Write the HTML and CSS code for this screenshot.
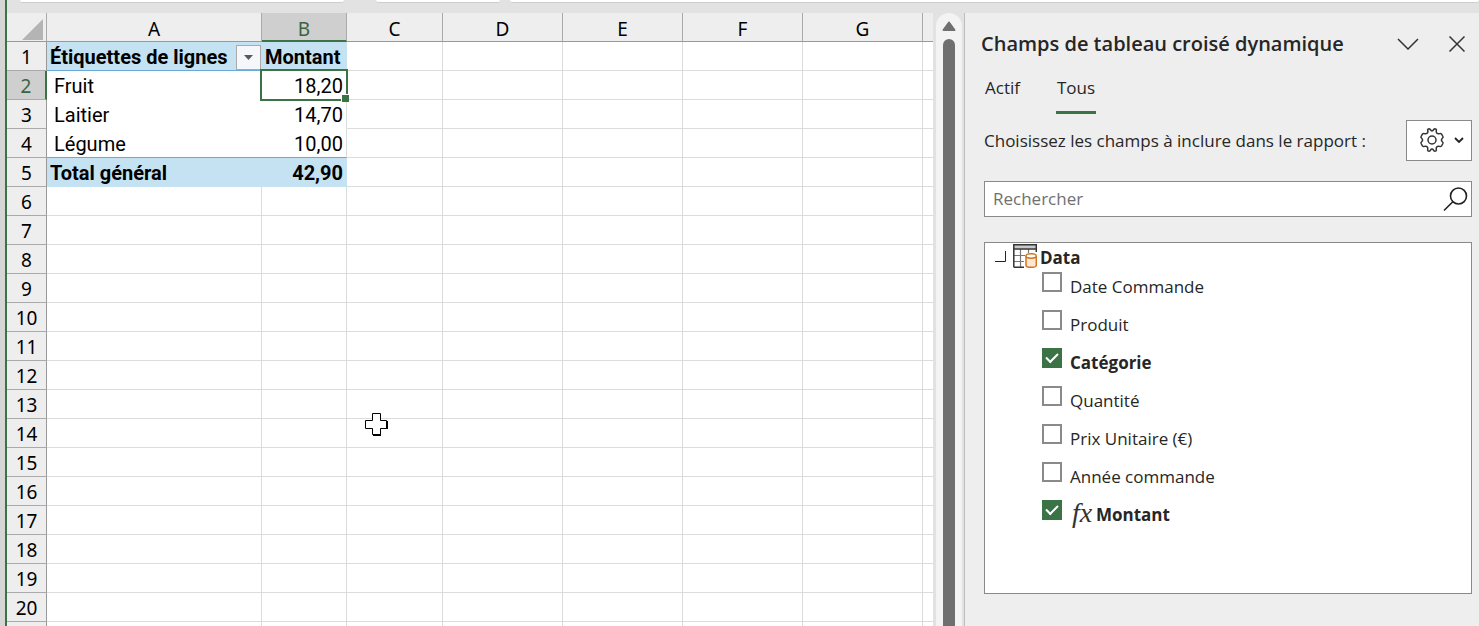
FILE: index.html
```
<!DOCTYPE html>
<html lang="fr">
<head>
  <meta charset="UTF-8">
  <meta name="viewport" content="width=device-width, initial-scale=1.0">
  <title>Tableau croisé dynamique</title>
  <link rel="stylesheet" href="styles.css">
</head>
<body>
  <div class="window">
    <div class="formula-bar">
      <div class="name-box"></div>
      <div class="formula-tools"></div>
      <div class="formula-input"></div>
    </div>

    <div class="workspace">
      <div class="sheet">
        <table class="grid">
          <colgroup>
            <col class="col-num">
            <col class="col-a">
            <col class="col-b">
            <col class="col-c">
            <col class="col-std">
            <col class="col-std">
            <col class="col-std">
            <col class="col-std">
            <col>
          </colgroup>
          <thead>
            <tr>
              <th class="corner"><svg width="21" height="21" viewBox="0 0 21 21"><path d="M21 0V21H0Z" fill="#b4b4b4"/></svg></th>
              <th>A</th>
              <th class="active">B</th>
              <th>C</th>
              <th>D</th>
              <th>E</th>
              <th>F</th>
              <th>G</th>
              <th></th>
            </tr>
          </thead>
          <tbody>
            <tr class="pivot-head">
              <th>1</th>
              <td>
                <div class="filter-cell">
                  <span>Étiquettes de lignes</span>
                  <button class="filter" aria-label="Filtrer"><svg width="9" height="5" viewBox="0 0 9 5"><path d="M0 0H9L4.5 5Z" fill="#595959"/></svg></button>
                </div>
              </td>
              <td>Montant</td>
              <td></td><td></td><td></td><td></td><td></td><td></td>
            </tr>
            <tr class="pivot-row">
              <th class="active">2</th>
              <td>Fruit</td>
              <td class="selected">18,20</td>
              <td></td><td></td><td></td><td></td><td></td><td></td>
            </tr>
            <tr class="pivot-row">
              <th>3</th>
              <td>Laitier</td>
              <td>14,70</td>
              <td></td><td></td><td></td><td></td><td></td><td></td>
            </tr>
            <tr class="pivot-row pivot-last">
              <th>4</th>
              <td>Légume</td>
              <td>10,00</td>
              <td></td><td></td><td></td><td></td><td></td><td></td>
            </tr>
            <tr class="pivot-total">
              <th>5</th>
              <td>Total général</td>
              <td>42,90</td>
              <td></td><td></td><td></td><td></td><td></td><td></td>
            </tr>
            <tr><th>6</th><td></td><td></td><td></td><td></td><td></td><td></td><td></td><td></td></tr>
            <tr><th>7</th><td></td><td></td><td></td><td></td><td></td><td></td><td></td><td></td></tr>
            <tr><th>8</th><td></td><td></td><td></td><td></td><td></td><td></td><td></td><td></td></tr>
            <tr><th>9</th><td></td><td></td><td></td><td></td><td></td><td></td><td></td><td></td></tr>
            <tr><th>10</th><td></td><td></td><td></td><td></td><td></td><td></td><td></td><td></td></tr>
            <tr><th>11</th><td></td><td></td><td></td><td></td><td></td><td></td><td></td><td></td></tr>
            <tr><th>12</th><td></td><td></td><td></td><td></td><td></td><td></td><td></td><td></td></tr>
            <tr><th>13</th><td></td><td></td><td></td><td></td><td></td><td></td><td></td><td></td></tr>
            <tr><th>14</th><td></td><td></td><td></td><td></td><td></td><td></td><td></td><td></td></tr>
            <tr><th>15</th><td></td><td></td><td></td><td></td><td></td><td></td><td></td><td></td></tr>
            <tr><th>16</th><td></td><td></td><td></td><td></td><td></td><td></td><td></td><td></td></tr>
            <tr><th>17</th><td></td><td></td><td></td><td></td><td></td><td></td><td></td><td></td></tr>
            <tr><th>18</th><td></td><td></td><td></td><td></td><td></td><td></td><td></td><td></td></tr>
            <tr><th>19</th><td></td><td></td><td></td><td></td><td></td><td></td><td></td><td></td></tr>
            <tr><th>20</th><td></td><td></td><td></td><td></td><td></td><td></td><td></td><td></td></tr>
            <tr><th></th><td></td><td></td><td></td><td></td><td></td><td></td><td></td><td></td></tr>
          </tbody>
        </table>
        <svg class="cursor" width="23" height="23" viewBox="0 0 23 23">
          <path d="M8 1H16V8H23V16H16V23H8V16H1V8H8Z" fill="#000"/>
          <path d="M7.5 .5H15.5V7.5H21.5V15.5H15.5V21.5H7.5V15.5H.5V7.5H7.5Z" fill="#fff" stroke="#000"/>
        </svg>
      </div>

      <div class="scrollbar">
        <svg width="14" height="10" viewBox="0 0 14 10"><path d="M7 1.5L12.5 9H1.5Z" fill="#6f6f6f" stroke="#6f6f6f" stroke-width="2" stroke-linejoin="round"/></svg>
        <div class="thumb"></div>
      </div>

      <aside class="pane">
        <header class="pane-header">
          <h1>Champs de tableau croisé dynamique</h1>
          <button class="icon-button" aria-label="Options du volet"><svg width="22" height="12" viewBox="0 0 22 12"><path d="M1 1L11 11L21 1" fill="none" stroke="#333" stroke-width="1.5"/></svg></button>
          <button class="icon-button" aria-label="Fermer"><svg width="16" height="16" viewBox="0 0 16 16"><path d="M.5 .5L15.5 15.5M15.5 .5L.5 15.5" stroke="#333" stroke-width="1.5"/></svg></button>
        </header>

        <nav class="tabs">
          <button class="tab">Actif</button>
          <button class="tab current">Tous</button>
        </nav>

        <div class="choose">
          <p>Choisissez les champs à inclure dans le rapport :</p>
          <button class="tools" aria-label="Outils">
            <svg width="26" height="26" viewBox="0 0 26 26" fill="none" stroke="#333" stroke-width="1.5" stroke-linejoin="round">
              <path d="M9 5L8.600 2.800Q8.700 1.800 10.200 1.700Q11.200 1.700 11.400 2.800Q13 5 14.600 2.800Q14.800 1.700 15.800 1.700Q17.300 1.800 17.400 2.800L17.200 5Q18 7.400 20.600 6.600Q21.800 6 22.600 7.200L23.900 9.500Q24.400 10.600 23.400 11.200Q21.400 13 23.400 14.800Q24.400 15.400 23.900 16.500L22.600 18.800Q21.800 20 20.600 19.400Q18 18.600 17.200 21L17.400 23.200Q17.300 24.200 15.800 24.300Q14.800 24.300 14.600 23.200Q13 21 11.400 23.200Q11.200 24.300 10.200 24.300Q8.700 24.200 8.600 23.200L8.800 21Q8 18.600 5.400 19.400Q4.200 20 3.400 18.800L2.100 16.500Q1.600 15.400 2.600 14.800Q4.600 13 2.600 11.200Q1.600 10.600 2.100 9.500L3.400 7.200Q4.200 6 5.400 6.600Q8 7.400 9 5Z"/>
              <circle cx="13" cy="13" r="4"/>
            </svg>
            <svg width="10" height="6" viewBox="0 0 10 6"><path d="M1 1L5 5L9 1" fill="none" stroke="#222" stroke-width="1.8"/></svg>
          </button>
        </div>

        <div class="search">
          <input type="text" placeholder="Rechercher" aria-label="Rechercher">
          <svg width="25" height="25" viewBox="0 0 25 25" fill="none" stroke="#222" stroke-width="1.6"><circle cx="15.500" cy="9" r="8"/><path d="M9.800 14.700L1 23.500"/></svg>
        </div>

        <div class="fields">
          <div class="source">
            <svg width="11" height="11" viewBox="0 0 11 11"><path d="M10.5 0V10.5H0" fill="none" stroke="#222"/></svg>
            <svg width="24" height="24" viewBox="0 0 24 24" fill="none">
              <rect x=".5" y=".5" width="23" height="4" fill="#c8c8c8"/>
              <path d="M1 11.500H12M1 17.500H11M7.500 5V23M15.500 5V9" stroke="#777" stroke-width="1.2"/>
              <path d="M.8 23.300V.8H23.300V8M.8 5H23.300M.8 23.300H11" stroke="#333" stroke-width="1.5"/>
              <path d="M13 12V21.500Q13 23.300 18 23.300T23.300 21.500V12" fill="#fce8d4" stroke="#d4731c" stroke-width="1.5"/>
              <ellipse cx="18.100" cy="12" rx="5.100" ry="2.200" fill="#fff" stroke="#d4731c" stroke-width="1.5"/>
            </svg>
            <span>Data</span>
          </div>
          <ul>
            <li><label><input type="checkbox"><span>Date Commande</span></label></li>
            <li><label><input type="checkbox"><span>Produit</span></label></li>
            <li><label><input type="checkbox" checked><span>Catégorie</span></label></li>
            <li><label><input type="checkbox"><span>Quantité</span></label></li>
            <li><label><input type="checkbox"><span>Prix Unitaire (€)</span></label></li>
            <li><label><input type="checkbox"><span>Année commande</span></label></li>
            <li><label><input type="checkbox" checked><i class="fx">fx</i><span>Montant</span></label></li>
          </ul>
        </div>
      </aside>
    </div>
  </div>
</body>
</html>
```

FILE: styles.css
```
* {
  box-sizing: border-box;
}

body {
  margin: 0;
  font-family: "Open Sans", "Noto Sans", sans-serif;
  color: #262626;
  background-color: #d6d6d6;
}

button {
  font: inherit;
  color: inherit;
  padding: 0;
  cursor: pointer;
}

svg {
  display: block;
  flex-shrink: 0;
}

.window {
  display: flex;
  flex-direction: column;
  height: 100vh;
  margin-left: 5px;
  border-left: 2px solid #3b7347;
  background-color: #e2e2e2;
  overflow: hidden;
}

/* Bottom edge of the formula bar */
.formula-bar {
  display: flex;
  align-items: flex-start;
  height: 13px;
  padding-left: 13px;
  flex-shrink: 0;
}

.formula-bar div {
  height: 3px;
  background-color: #fff;
  border-bottom: 1px solid #cdcdcd;
  border-radius: 0 0 4px 4px;
}

.formula-bar .name-box {
  width: 324px;
}

.formula-bar .formula-tools {
  width: 124px;
  margin: 0 10px 0 32px;
}

.formula-bar .formula-input {
  flex: 1;
}

.workspace {
  display: flex;
  flex: 1;
  min-height: 0;
}

/* Spreadsheet */
.sheet {
  position: relative;
  flex: 1;
  min-width: 0;
  background-color: #fff;
  overflow: hidden;
}

.grid {
  width: 100%;
  table-layout: fixed;
  border-collapse: separate;
  border-spacing: 0;
  font-family: Roboto, sans-serif;
  font-size: 20px;
  line-height: 26px;
  color: #000;
}

.col-num {
  width: 40px;
}

.col-a {
  width: 215px;
}

.col-b {
  width: 85px;
}

.col-c {
  width: 96px;
}

.col-std {
  width: 120px;
}

.grid th,
.grid td {
  height: 29px;
  padding: 2px 0 0;
  white-space: nowrap;
  border-right: 1px solid #dcdcdc;
  border-bottom: 1px solid #dcdcdc;
}

.grid th {
  font-family: "Noto Sans", sans-serif;
  font-size: 19px;
  font-weight: 400;
  background-color: #eee;
  border-right-color: #999;
  border-bottom-color: #aaa;
}

.grid thead th {
  padding-top: 4px;
  line-height: 24px;
  border-right-color: #aaa;
  border-bottom-color: #999;
}

.grid th:last-child,
.grid td:last-child {
  border-right: none;
}

.grid .corner svg {
  margin: 0 3px 0 auto;
}

.grid th.active {
  color: #3a6344;
  background-color: #cfcfcf;
}

.grid thead th.active {
  padding-top: 5px;
  line-height: 22px;
  border-bottom: 2px solid #3b7347;
}

.grid tbody th.active {
  border-right: 2px solid #3b7347;
}

.pivot-head td:nth-child(-n+3),
.pivot-total td:nth-child(-n+3) {
  font-weight: 700;
  background-color: #c5e2f3;
  border-right-color: #c5e2f3;
  border-bottom-color: #c5e2f3;
}

.pivot-head td:nth-child(-n+3),
.pivot-last td:nth-child(-n+3) {
  border-bottom-color: #67a9d7;
}

.pivot-head td:nth-child(2),
.pivot-row td:nth-child(2),
.pivot-total td:nth-child(2) {
  border-right: none;
}

.pivot-row td:nth-child(2) {
  padding-left: 7px;
}

.pivot-row:not(.pivot-last) td:nth-child(-n+3) {
  border-bottom-color: #fff;
}

.pivot-row td:nth-child(3),
.pivot-total td:nth-child(3) {
  padding-right: 3px;
  text-align: right;
}

.pivot-head td:nth-child(3),
.pivot-total td:nth-child(2) {
  padding-left: 3px;
}

.filter-cell {
  display: flex;
  align-items: center;
  justify-content: space-between;
  height: 26px;
  padding: 0 1px 0 3px;
}

.filter {
  display: flex;
  align-items: center;
  justify-content: center;
  width: 25px;
  height: 25px;
  background-color: #f5f7fb;
  border: 1px solid #aaa;
}

.grid .selected {
  position: relative;
}

.selected::before {
  content: "";
  position: absolute;
  inset: -2px;
  border: 2px solid #3b7347;
}

.selected::after {
  content: "";
  position: absolute;
  right: -3px;
  bottom: -3px;
  width: 7px;
  height: 7px;
  background-color: #3b7347;
  border: solid #fff;
  border-width: 1px 0 0 1px;
}

.cursor {
  position: absolute;
  left: 358px;
  top: 400px;
}

/* Vertical scrollbar */
.scrollbar {
  display: flex;
  flex-direction: column;
  align-items: center;
  gap: 8px;
  width: 26px;
  margin: 0 2px 0 3px;
  padding-top: 8px;
  background-color: #f3f3f3;
  border-radius: 13px 13px 0 0;
}

.thumb {
  flex: 1;
  width: 12px;
  background-color: #6f6f6f;
  border-radius: 6px 6px 0 0;
}

/* Field list pane */
.pane {
  display: flex;
  flex-direction: column;
  width: 515px;
  flex-shrink: 0;
  padding: 0 7px 32px 19px;
  font-size: 17px;
  line-height: 24px;
  background-color: #eee;
  border-left: 1px solid #bdbdbd;
}

.pane-header {
  display: flex;
  align-items: center;
  gap: 30px;
  height: 62px;
  padding-right: 7px;
}

.pane-header h1 {
  flex: 1;
  margin: 0 0 0 -3px;
  font-size: 20px;
  font-weight: 600;
  white-space: nowrap;
}

.icon-button {
  display: flex;
  background: none;
  border: none;
}

.tabs {
  display: flex;
  gap: 35px;
}

.tab {
  height: 39px;
  padding: 0 1px 10px;
  background: none;
  border: none;
  border-bottom: 3px solid transparent;
}

.tab.current {
  border-bottom-color: #3b7347;
}

.choose {
  display: flex;
  align-items: center;
  justify-content: space-between;
  margin: 6px 0 20px;
}

.choose p {
  margin: 0;
}

.tools {
  display: flex;
  align-items: center;
  justify-content: center;
  gap: 9px;
  width: 66px;
  height: 41px;
  padding: 0 0 2px 5px;
  background-color: #fff;
  border: 1px solid #8a8a8a;
}

.search {
  display: flex;
  align-items: center;
  height: 36px;
  padding: 0 3px 0 8px;
  background-color: #fff;
  border: 1px solid #8a8a8a;
}

.search input {
  flex: 1;
  min-width: 0;
  padding: 0;
  font: inherit;
  background: none;
  border: none;
  outline: none;
}

.search input::placeholder {
  color: #707070;
}

.fields {
  flex: 1;
  margin-top: 25px;
  background-color: #fff;
  border: 1px solid #8a8a8a;
  overflow: hidden;
}

.source {
  display: flex;
  align-items: center;
  gap: 3px;
  height: 29px;
  padding-left: 10px;
  font-weight: 700;
}

.source svg {
  margin-bottom: 3px;
}

.source svg + svg {
  margin-left: 4px;
}

.fields ul {
  margin: 0;
  padding: 0 0 0 57px;
  list-style: none;
}

.fields label {
  display: flex;
  align-items: flex-start;
  height: 38px;
}

.fields input {
  appearance: none;
  width: 20px;
  height: 20px;
  margin: 0 8px 0 0;
  border: 2px solid #8a8a8a;
  background-color: #fff;
}

.fields label span {
  padding-top: 3px;
}

.fields input:checked {
  display: grid;
  place-items: center;
  background-color: #3b7347;
  border-color: #3b7347;
}

.fields input:checked::before {
  content: "";
  width: 10px;
  height: 5px;
  margin-bottom: 3px;
  border: solid #fff;
  border-width: 0 0 2px 2px;
  transform: rotate(-45deg);
}

.fields input:checked ~ span {
  font-weight: 700;
}

.fx {
  width: 26px;
  padding-left: 2px;
  font-family: "Liberation Serif", serif;
  font-size: 28px;
  line-height: 26px;
  color: #333;
}
```
